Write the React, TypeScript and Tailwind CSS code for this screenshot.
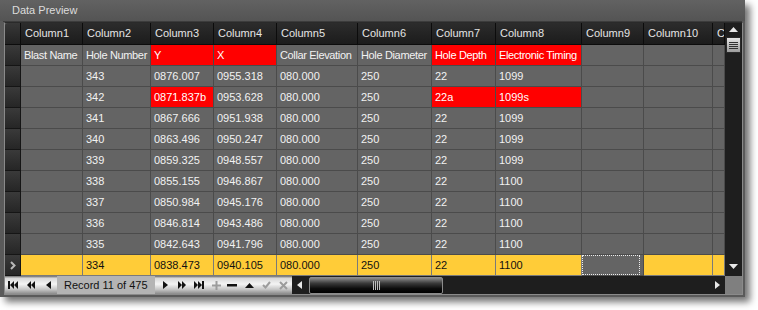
import React from "react"

const W = [
  "w-[62px]",
  "w-[68px]",
  "w-[63px]",
  "w-[63px]",
  "w-[81px]",
  "w-[74px]",
  "w-[64px]",
  "w-[86px]",
  "w-[62px]",
  "w-[69px]",
  "w-[12px]",
]

const HEAD = ["Column1", "Column2", "Column3", "Column4", "Column5", "Column6", "Column7", "Column8", "Column9", "Column10", "Column11"]

type Row = { v: string[]; red?: number[] }

const rows: Row[] = [
  { v: ["Blast Name", "Hole Number", "Y", "X", "Collar Elevation", "Hole Diameter", "Hole Depth", "Electronic Timing"], red: [2, 3, 6, 7] },
  { v: ["", "343", "0876.007", "0955.318", "080.000", "250", "22", "1099"] },
  { v: ["", "342", "0871.837b", "0953.628", "080.000", "250", "22a", "1099s"], red: [2, 6, 7] },
  { v: ["", "341", "0867.666", "0951.938", "080.000", "250", "22", "1099"] },
  { v: ["", "340", "0863.496", "0950.247", "080.000", "250", "22", "1099"] },
  { v: ["", "339", "0859.325", "0948.557", "080.000", "250", "22", "1099"] },
  { v: ["", "338", "0855.155", "0946.867", "080.000", "250", "22", "1100"] },
  { v: ["", "337", "0850.984", "0945.176", "080.000", "250", "22", "1100"] },
  { v: ["", "336", "0846.814", "0943.486", "080.000", "250", "22", "1100"] },
  { v: ["", "335", "0842.643", "0941.796", "080.000", "250", "22", "1100"] },
  { v: ["", "334", "0838.473", "0940.105", "080.000", "250", "22", "1100"] },
]

function Tri({ dir, color = "#111" }: { dir: "l" | "r" | "u" | "d"; color?: string }) {
  if (dir === "l") return <svg width="5" height="8"><polygon points="5,0 0,4 5,8" fill={color} /></svg>
  if (dir === "r") return <svg width="5" height="8"><polygon points="0,0 5,4 0,8" fill={color} /></svg>
  if (dir === "u") return <svg width="9" height="5"><polygon points="0,5 4.5,0 9,5" fill={color} /></svg>
  return <svg width="9" height="5"><polygon points="0,0 4.5,5 9,0" fill={color} /></svg>
}

function Navigator() {
  return (
    <div className="flex h-full w-[287px] items-center bg-[linear-gradient(to_bottom,#6a6a6a_0%,#d8d8d8_12%,#f4f4f4_45%,#c4c4c4_75%,#8a8a8a_100%)]">
      <svg className="ml-[3px]" width="10" height="8">
        <rect x="0" y="0" width="2" height="8" fill="#111" />
        <polygon points="6,0 2,4 6,8" fill="#111" />
        <polygon points="10,0 6,4 10,8" fill="#111" />
      </svg>
      <svg className="ml-[9px]" width="8" height="8">
        <polygon points="4,0 0,4 4,8" fill="#111" />
        <polygon points="8,0 4,4 8,8" fill="#111" />
      </svg>
      <span className="ml-[11px] flex">
        <Tri dir="l" />
      </span>
      <div className="ml-[6px] flex h-full w-[98px] items-center bg-[#b4b4b4] pl-[7px] text-[11px] text-[#111]">
        Record 11 of 475
      </div>
      <span className="ml-[8px] flex">
        <Tri dir="r" />
      </span>
      <svg className="ml-[10px]" width="8" height="8">
        <polygon points="0,0 4,4 0,8" fill="#111" />
        <polygon points="4,0 8,4 4,8" fill="#111" />
      </svg>
      <svg className="ml-[8px]" width="10" height="8">
        <polygon points="0,0 4,4 0,8" fill="#111" />
        <polygon points="4,0 8,4 4,8" fill="#111" />
        <rect x="8" y="0" width="2" height="8" fill="#111" />
      </svg>
      <svg className="ml-[8px]" width="9" height="9">
        <rect x="3.5" y="0" width="2" height="9" fill="#9c9c9c" />
        <rect x="0" y="3.5" width="9" height="2" fill="#9c9c9c" />
      </svg>
      <svg className="ml-[6px]" width="10" height="3">
        <rect x="0" y="0" width="10" height="2.5" fill="#111" />
      </svg>
      <span className="ml-[8px] flex">
        <Tri dir="u" />
      </span>
      <svg className="ml-[8px]" width="9" height="8">
        <polyline points="1,4 3.5,6.5 8,1" fill="none" stroke="#9c9c9c" strokeWidth="2" />
      </svg>
      <svg className="ml-[8px]" width="9" height="9">
        <path d="M1 1L8 8M8 1L1 8" stroke="#9c9c9c" strokeWidth="2" />
      </svg>
    </div>
  )
}

function HScroll() {
  return (
    <div className="flex h-full w-[433px] items-center bg-[#1e1e1e]">
      <span className="ml-[5px] flex">
        <Tri dir="l" color="#e8e8e8" />
      </span>
      <div className="ml-[7px] flex h-[17px] w-[134px] items-center justify-center rounded-[2px] border border-[#8c8c8c] bg-[linear-gradient(to_bottom,#8a8a8a_0%,#3a3a3a_35%,#0c0c0c_70%,#000_100%)]">
        <div className="flex h-[9px] gap-[1px]">
          <div className="w-[1px] bg-[#bdbdbd]" />
          <div className="w-[1px] bg-[#bdbdbd]" />
          <div className="w-[1px] bg-[#bdbdbd]" />
          <div className="w-[1px] bg-[#bdbdbd]" />
        </div>
      </div>
      <div className="flex-1" />
      <span className="mr-[5px] flex">
        <Tri dir="r" color="#e8e8e8" />
      </span>
    </div>
  )
}

function VScroll() {
  return (
    <div className="flex h-[253px] w-[17px] flex-col items-center bg-[#1e1e1e] pt-[4px] pb-[7px]">
      <Tri dir="u" color="#e8e8e8" />
      <div className="mt-[5px] flex h-[16px] w-[15px] flex-col items-center justify-center gap-[1px] border border-[#2a2a2a] bg-[linear-gradient(to_bottom,#e6e6e6,#9c9c9c)]">
        <div className="h-[1px] w-[9px] bg-[#333]" />
        <div className="h-[1px] w-[9px] bg-[#333]" />
        <div className="h-[1px] w-[9px] bg-[#333]" />
        <div className="h-[1px] w-[9px] bg-[#333]" />
      </div>
      <div className="flex-1" />
      <Tri dir="d" color="#e8e8e8" />
    </div>
  )
}

function Grid() {
  return (
    <div className="flex w-[720px] flex-col overflow-hidden">
      <div className="flex h-[22px]">
        <div className="h-full w-[16px] shrink-0 rounded-tl-[3px] border-r border-b border-[#0c0c0c] bg-linear-to-b from-[#383838] to-[#222]" />
        {HEAD.map((h, i) => (
          <div
            key={h}
            className={`${W[i]} flex h-full shrink-0 items-center overflow-hidden border-r border-b border-[#0c0c0c] bg-linear-to-b from-[#2c2c2c] to-[#1c1c1c] pl-[4px] whitespace-nowrap text-[#e4e4e4]`}
          >
            {h}
          </div>
        ))}
      </div>
      {rows.map((r, ri) => {
        const sel = ri === rows.length - 1
        return (
          <div key={ri} className={`flex h-[21px] ${ri === 0 ? "tracking-[-0.35px]" : ""}`}>
            <div className="flex h-full w-[16px] shrink-0 items-center justify-center border-r border-b border-[#151515] bg-linear-to-b from-[#3a3a3a] to-[#262626]">
              {sel && (
                <svg width="6" height="9">
                  <polyline points="1,1 4.5,4.5 1,8" fill="none" stroke="#b8b8b8" strokeWidth="2" />
                </svg>
              )}
            </div>
            {W.map((w, ci) => {
              const red = r.red?.includes(ci)
              const focus = sel && ci === 8
              let cls = "bg-[#646464] text-[#f2f2f2] border-[#4b4b4b]"
              if (red) cls = "bg-[#ff0000] text-[#fff] border-[#4b4b4b]"
              if (sel && !focus) cls = "bg-[#ffcc38] text-[#111] border-[#7a7a7a]"
              return (
                <div
                  key={ci}
                  className={`${w} ${cls} flex h-full shrink-0 items-center overflow-hidden border-r border-b pl-[3px] whitespace-nowrap`}
                >
                  {focus ? (
                    <div className="-ml-[3px] h-full w-full border border-dotted border-[#eee]" />
                  ) : (
                    r.v[ci] ?? ""
                  )}
                </div>
              )
            })}
          </div>
        )
      })}
    </div>
  )
}

export default function App() {
  return (
    <div className="h-[310px] w-[758px] bg-white font-['Liberation_Sans',Arial,sans-serif] text-[11px] leading-none">
      <div className="flex h-[297px] w-[745px] flex-col bg-[#5a5a5a] shadow-[5px_5px_7px_rgba(0,0,0,0.55)]">
        <div className="flex h-[21px] items-center bg-linear-to-b from-[#626262] to-[#545454] pl-[12px] text-[#dcdcdc]">
          Data Preview
        </div>
        <div className="mx-[3px] h-[1px] bg-[#3c3c3c]" />
        <div className="ml-[4px] flex h-[273px] w-[739px] flex-col border border-[#8a8a8a] border-t-[#2a2a2a]">
          <div className="flex h-[253px]">
            <Grid />
            <VScroll />
          </div>
          <div className="flex h-[18px]">
            <Navigator />
            <HScroll />
            <div className="h-full w-[17px] bg-[#7f7f7f]" />
          </div>
        </div>
      </div>
    </div>
  )
}
